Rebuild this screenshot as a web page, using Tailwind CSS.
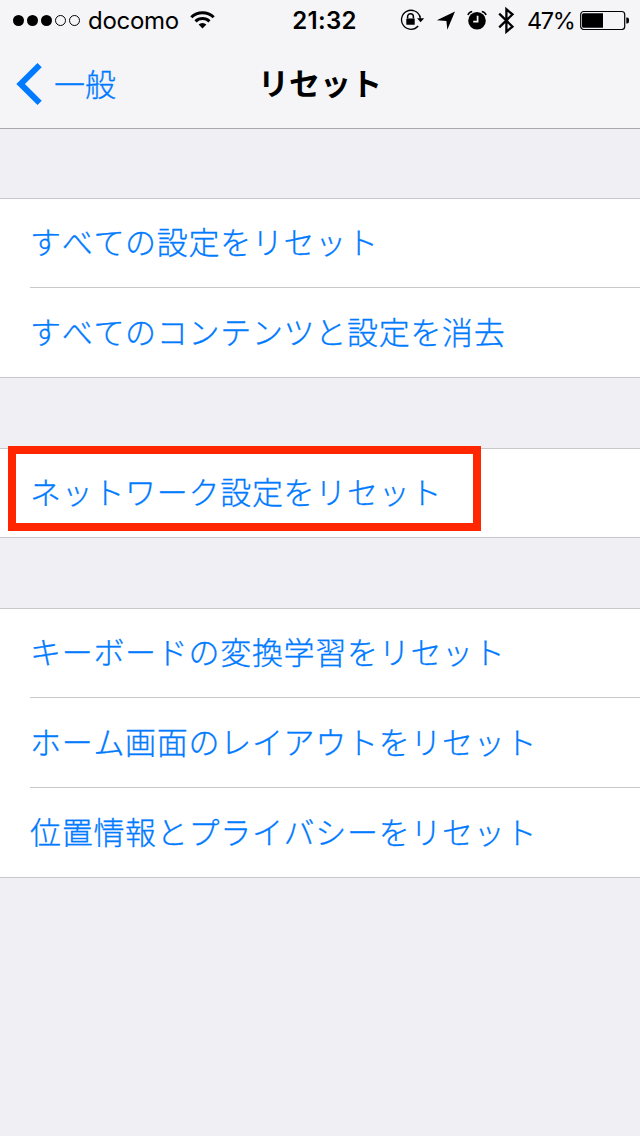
<!DOCTYPE html>
<html lang="ja">
<head>
<meta charset="utf-8">
<title>リセット</title>
<script src="https://cdn.jsdelivr.net/npm/@tailwindcss/browser@4"></script>
</head>
<body class="w-[640px] h-[1136px] overflow-hidden bg-[#efeff4] font-['Noto_Sans_CJK_JP',sans-serif] text-[#007aff] [font-kerning:none]">
<header class="h-[129px] bg-[#f5f5f7] border-b border-[#a9a9ad]">
  <div class="h-10 grid grid-cols-[1fr_auto_1fr] items-center text-black font-['Inter','Noto_Sans_CJK_JP',sans-serif] text-2xl leading-[38px] whitespace-nowrap">
    <div class="flex items-center pl-[12px]">
      <svg class="w-[69px] h-[12px]" viewBox="0 0 69 12"><g><circle cx="6.5" cy="6.5" r="5.5"/><circle cx="20.5" cy="6.5" r="5.5"/><circle cx="34.5" cy="6.5" r="5.5"/></g><g fill="none" stroke="#000"><circle cx="48.5" cy="6.5" r="5"/><circle cx="62.5" cy="6.5" r="5"/></g></svg>
      <span class="ml-[7px] w-[91px] pt-[2px] leading-[38px] text-[24px] tracking-[-0.3px]">docomo</span>
      <svg class="ml-[11px] w-[25px] h-[18px]" viewBox="0 0 25 18"><g fill="none" stroke="#000" stroke-width="3"><path d="M1.3 6.2a16 16 0 0 1 22.4 0"/><path d="M5.5 10.4a10 10 0 0 1 14 0"/></g><path d="M8.6 13.6a5.6 5.6 0 0 1 7.8 0L12.5 17.6z"/></svg>
    </div>
    <div class="w-[66px] ml-[9px] pt-[2px] text-center font-semibold text-[24px] leading-[38px] tracking-[0.3px]">21:32</div>
    <div class="flex items-center justify-end pr-[10px]">
      <svg class="w-[25px] h-[22px]" viewBox="0 0 25 22"><path d="M20.1 8A9.5 9.5 0 1 0 18.2 17" fill="none" stroke="#000" stroke-width="1.3"/><path d="M17 9.3H24.2L20.6 13.3z"/><path d="M19.4 6l1.1 4" stroke="#000" stroke-width="1.3"/><path d="M7.6 9.6V7.6a2.9 2.9 0 0 1 5.8 0v2" fill="none" stroke="#000" stroke-width="1.5"/><rect x="6.3" y="9.4" width="8.4" height="6.3" rx=".5"/></svg>
      <svg class="ml-[11px] w-[20px] h-[19px]" viewBox="0 0 20 19"><path d="M19 .5L11.3 18.7L10.4 10L.8 9.2z"/></svg>
      <svg class="ml-[11px] w-[20px] h-[20px]" viewBox="0 0 20 20"><circle cx="10" cy="10.7" r="8.8"/><path d="M.9 5Q2 2 5.2 1.4M19.1 5Q18 2 14.8 1.4" fill="none" stroke="#000" stroke-width="1.5"/><path d="M10.6 5.8V11.6H6.2" fill="none" stroke="#f5f5f7" stroke-width="1.7"/></svg>
      <svg class="ml-[11px] w-[17px] h-[28px]" viewBox="0 0 17 28"><path d="M1.2 7.7L14.5 20.6L8.4 25.7V3.3L14.5 8.4L1.2 21.3" fill="none" stroke="#000" stroke-width="2.3"/></svg>
      <span class="ml-[12px] w-[48px] pt-[2px] leading-[38px] text-[23.5px] tracking-[-1.4px]">47%</span>
      <svg class="ml-[5px] w-[50px] h-5" viewBox="0 0 50 20"><rect x=".7" y="1.5" width="44" height="18" rx="3" fill="none" stroke="#000" stroke-width="1.2"/><path d="M3.5 3.2H23V17.8H3.5a1.5 1.5 0 0 1-1.5-1.5V4.7a1.5 1.5 0 0 1 1.5-1.5zM46.3 7.5h.7a2 2 0 0 1 2 2v2a2 2 0 0 1-2 2h-.7z"/></svg>
    </div>
  </div>
  <nav class="h-[88px] grid grid-cols-[1fr_auto_1fr] items-center whitespace-nowrap">
    <div class="flex items-center pl-4 text-[31px] font-light [-webkit-text-stroke:0.3px_#007aff]">
      <svg class="w-[27px] h-[42px]" viewBox="0 0 27 42"><path d="M23.6 2.2L4.6 21L23.6 39.8" fill="none" stroke="#007aff" stroke-width="6"/></svg>
      <span class="ml-[11px] pb-[1px]">一般</span>
    </div>
    <h1 class="pb-[3px] text-[31px] font-bold text-black">リセット</h1>
  </nav>
</header>
<main class="pt-[69px] flex flex-col gap-[70px] text-[31px] font-light tracking-[0.7px] whitespace-nowrap [-webkit-text-stroke:0.3px_#007aff]">
  <section class="bg-white border-y border-[#c8c7cc]">
    <div class="pl-[30px]"><div class="h-[89px] pb-[4px] flex items-center border-b border-[#c8c7cc]">すべての設定をリセット</div></div>
    <div class="pl-[30px] h-[89px] pb-[3px] flex items-center">すべてのコンテンツと設定を消去</div>
  </section>
  <section class="relative bg-white border-y border-[#c8c7cc]">
    <div class="pl-[30px] h-[88px] pb-[4px] flex items-center">ネットワーク設定をリセット</div>
    <div class="absolute left-2 -top-[3px] w-[473px] h-[85px] border-8 border-[#ff2600]"></div>
  </section>
  <section class="bg-white border-y border-[#c8c7cc]">
    <div class="pl-[30px]"><div class="h-[89px] pb-[4px] flex items-center border-b border-[#c8c7cc]">キーボードの変換学習をリセット</div></div>
    <div class="pl-[30px]"><div class="h-[90px] pb-[3px] flex items-center border-b border-[#c8c7cc]">ホーム画面のレイアウトをリセット</div></div>
    <div class="pl-[30px] h-[89px] pb-[3px] flex items-center">位置情報とプライバシーをリセット</div>
  </section>
</main>
</body>
</html>
